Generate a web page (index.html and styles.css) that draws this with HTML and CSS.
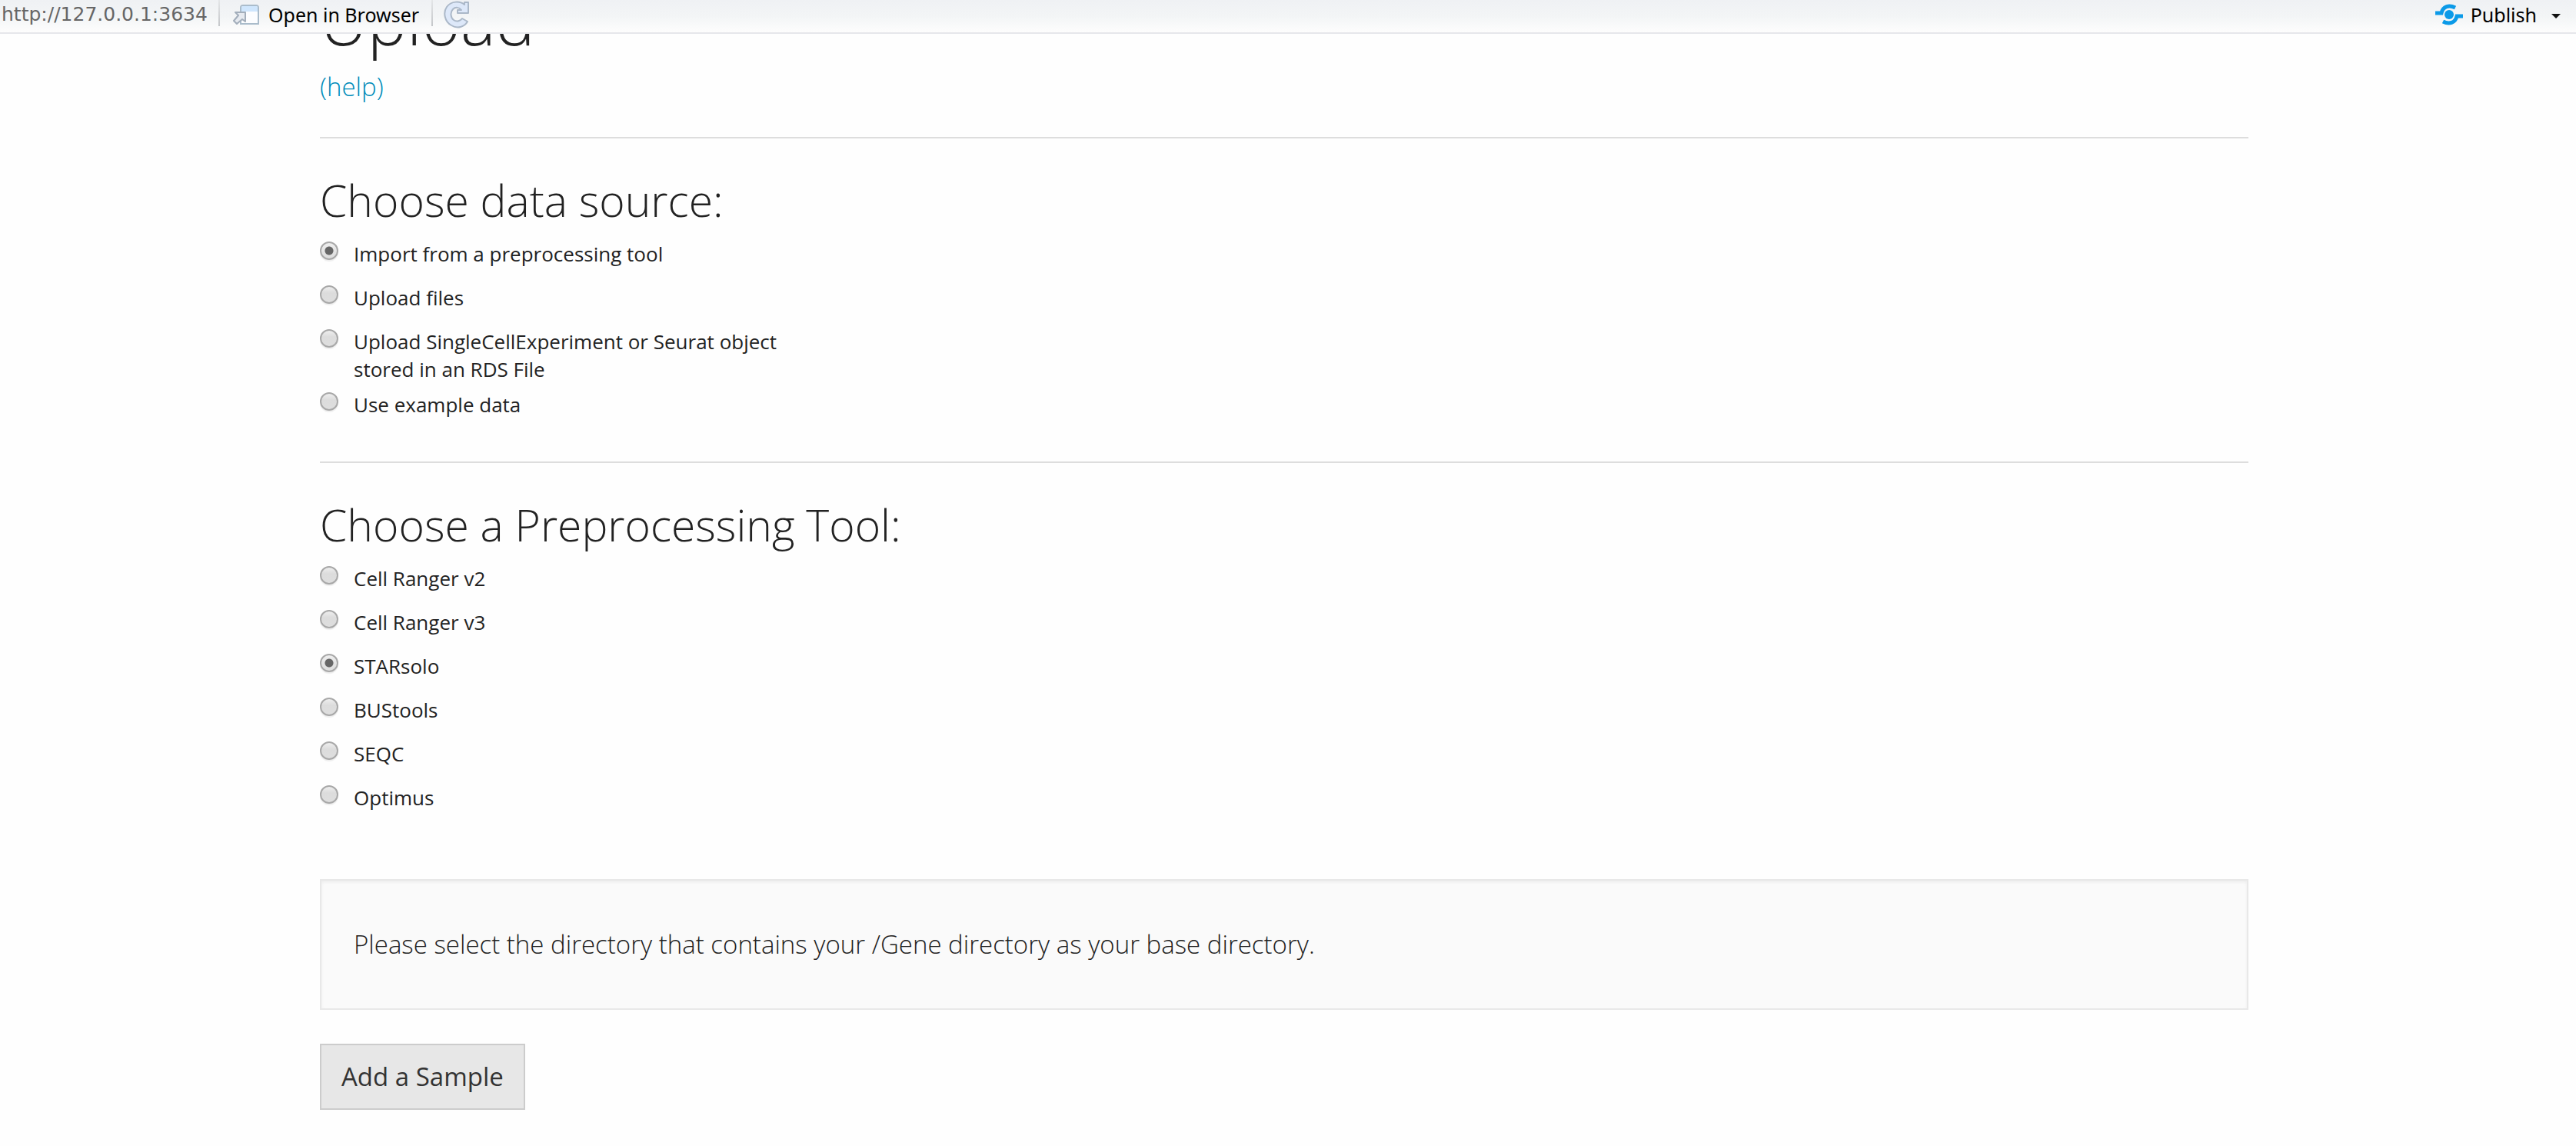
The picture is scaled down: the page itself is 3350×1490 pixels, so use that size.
FILE: index.html
```html
<!DOCTYPE html>
<html lang="en">
<head>
<meta charset="utf-8">
<title>Upload</title>
<link rel="stylesheet" href="styles.css">
</head>
<body>
<header class="toolbar">
  <span class="url">http://127.0.0.1:3634</span>
  <span class="sep"></span>
  <button class="tool open" type="button">
    <svg width="34" height="26" viewBox="0 0 34 26" aria-hidden="true">
      <path d="M10 4Q10 1 13 1H30Q33 1 33 4V25H10Z" fill="#fcfdff" stroke="#aabccb" stroke-width="2"/>
      <path d="M11 4Q11 2 13 2H30Q32 2 32 4V9H11Z" fill="#cfe6fd"/>
      <path d="M3 10H16V22L12 19L5 25L1 21L7 14Z" fill="#e6eaf0" stroke="#a3aebb" stroke-width="2" stroke-linejoin="round"/>
    </svg>
    Open in Browser
  </button>
  <span class="sep"></span>
  <button class="tool" type="button" aria-label="Refresh">
    <svg width="34" height="36" viewBox="0 0 34 36" aria-hidden="true">
      <path d="M32 2V16H18V12H23C20 8 15 8 12 11C8 15 9 22 13 25C17 28 22 26 24 23L31 27C27 34 18 37 10 32C1 27-1 15 4 8C10 0 21 0 27 5V2Z" fill="#dde8f9" stroke="#abb8c8" stroke-width="2" stroke-linejoin="round"/>
    </svg>
  </button>
  <button class="tool publish" type="button">
    <svg width="36" height="28" viewBox="0 0 36 28" aria-hidden="true">
      <circle cx="18" cy="14" r="6" fill="#0b9ae8"/>
      <path d="M0 12H8C10 3 18 1 26 5M36 16H28C26 25 18 27 10 23" fill="none" stroke="#0b9ae8" stroke-width="5"/>
    </svg>
    Publish
    <svg class="caret" width="12" height="6" viewBox="0 0 12 6" aria-hidden="true"><path d="M0 0H12L6 6Z" fill="#111"/></svg>
  </button>
</header>
<main class="page">
  <h1>Upload</h1>
  <p class="help"><a href="#help">(help)</a></p>
  <hr>
  <h3 id="source-title">Choose data source:</h3>
  <div class="choices" role="radiogroup" aria-labelledby="source-title">
    <label><input type="radio" name="source" checked><span>Import from a preprocessing tool</span></label>
    <label><input type="radio" name="source"><span>Upload files</span></label>
    <label><input type="radio" name="source"><span>Upload SingleCellExperiment or Seurat object stored in an RDS File</span></label>
    <label><input type="radio" name="source"><span>Use example data</span></label>
  </div>
  <hr>
  <h3 id="tool-title">Choose a Preprocessing Tool:</h3>
  <div class="choices" role="radiogroup" aria-labelledby="tool-title">
    <label><input type="radio" name="tool"><span>Cell Ranger v2</span></label>
    <label><input type="radio" name="tool"><span>Cell Ranger v3</span></label>
    <label><input type="radio" name="tool" checked><span>STARsolo</span></label>
    <label><input type="radio" name="tool"><span>BUStools</span></label>
    <label><input type="radio" name="tool"><span>SEQC</span></label>
    <label><input type="radio" name="tool"><span>Optimus</span></label>
  </div>
  <div class="well">Please select the directory that contains your /Gene directory as your base directory.</div>
  <button class="add" type="button">Add a Sample</button>
</main>
</body>
</html>
```
FILE: styles.css
```css
* { box-sizing: border-box; }

body {
  margin: 0;
  background: #fefefe;
  color: #222;
  font: 300 33px/48px "Open Sans", sans-serif;
}

.toolbar {
  position: sticky;
  top: 0;
  z-index: 1;
  display: flex;
  align-items: flex-start;
  height: 44px;
  padding: 0 20px 0 2px;
  border-bottom: 2px solid #e6e7eb;
  background: linear-gradient(#eff1f4, #f3f5f6 50%, #fdfdfd);
}

.url {
  width: 282px;
  color: #666;
  font: 400 25px/38px "DejaVu Sans", sans-serif;
}

.sep {
  width: 2px;
  height: 34px;
  background: linear-gradient(#e4e6e8, #c4c6c9);
}

.tool {
  display: flex;
  align-items: center;
  height: 38px;
  margin: 0;
  padding: 0 0 0 14px;
  border: 0;
  background: none;
  color: #000;
  font: 400 25px/38px "Noto Sans", sans-serif;
}

.open {
  width: 275px;
  gap: 12px;
  padding-left: 17px;
  white-space: nowrap;
}

.publish {
  gap: 10px;
  margin-left: auto;
}

.caret { margin: 4px 0 0 9px; }

/* The page is scrolled so that its title is partly under the toolbar. */
.page {
  width: calc(100% - 842px);
  min-width: 640px;
  margin: -81px 0 0 416px;
}

h1, h3, p { margin: 0; font-weight: 300; }
h1 { font-size: 86px; line-height: 126px; }
h3 { margin-bottom: 12px; font-size: 57px; line-height: 80px; }

a { color: #008cba; text-decoration: none; }

hr {
  height: 2px;
  margin: 41px 0 40px;
  border: 0;
  background: #ddd;
}

.choices {
  display: flex;
  flex-direction: column;
  gap: 10px;
  max-width: 620px;
  padding-bottom: 4px;
}

.choices label {
  display: flex;
  gap: 20px;
  min-height: 47px;
  font-size: 26px;
  font-weight: 400;
  line-height: 36px;
}

.choices input {
  flex: none;
  appearance: none;
  width: 24px;
  height: 24px;
  margin: 2px 0 0;
  border: 2px solid #a8a8a8;
  border-radius: 50%;
  background: linear-gradient(#eee, #dcdcdc 40%, #dedede);
  box-shadow: 0 2px 1px #eee;
}

.choices input:checked {
  background: radial-gradient(circle, #666 5px, transparent 6px), linear-gradient(#eee, #dcdcdc);
}

.well {
  margin: 73px 0 44px;
  padding: 59px 42px;
  border: 2px solid #e8e8e8;
  background: #fafafa;
  box-shadow: inset 0 2px 4px rgba(0, 0, 0, 0.06);
}

.add {
  display: block;
  height: 86px;
  padding: 0 26px;
  border: 2px solid #ccc;
  background: #e7e7e7;
  color: #333;
  font: 400 33px/48px "Open Sans", sans-serif;
}
```
